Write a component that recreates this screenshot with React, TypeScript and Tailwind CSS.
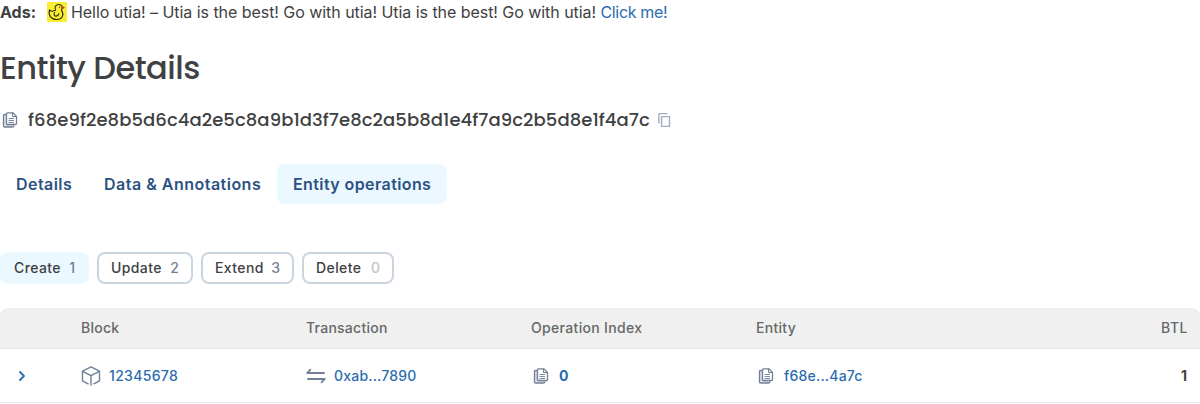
import React from "react";

function DocsIcon() {
  return (
    <svg className="size-5 shrink-0 text-[#718096]" viewBox="0 0 20 20" fill="none" stroke="currentColor" strokeLinejoin="round" strokeLinecap="round">
      <path d="M5.5 4.5H4.4q-.9 0-.9.9v10.5q0 1.1 1.1 1.1h8q1 0 1.3-1" strokeWidth="1.3" />
      <path d="M5.1 5.2v9.2q0 1.2 1.2 1.2h7" strokeWidth="1.8" strokeLinecap="butt" opacity=".3" />
      <path d="M7.5 2.8h5.3L16.5 6.4v7.1q0 1-1 1H7.5q-1 0-1-1V3.8q0-1 1-1z" strokeWidth="1.3" />
      <path d="M12.5 3v2.9q0 .6.6.6h3.1" strokeWidth="1.1" />
      <path d="M8.6 8.5h5.4M8.6 10.5h5.4M8.6 12.5h5.4" strokeWidth=".9" strokeLinecap="butt" />
    </svg>
  );
}

function CopyIcon() {
  return (
    <svg className="ml-1.5 size-5 shrink-0 text-[#a0aec0]" viewBox="0 0 20 20" fill="none" stroke="currentColor" strokeWidth="1.4">
      <path d="M2.9 13.6V4.4q0-.8.8-.8h7.8" />
      <path d="M5.6 6.6h7.9v9.8H5.6z" strokeLinejoin="round" />
    </svg>
  );
}

function BlockIcon() {
  return (
    <svg className="size-5 shrink-0 text-[#718096]" viewBox="0 0 20 20" fill="none" stroke="currentColor" strokeWidth="1.4" strokeLinejoin="round">
      <path d="M7.6 18.1 1.5 14.9V5.1L10 .9l8.5 4.2v9.8l-6.1 3.2M10 19.7V9.6M1.7 5.3 10 9.6l8.3-4.3" />
    </svg>
  );
}

function TransactionIcon() {
  return (
    <svg className="size-5 shrink-0 text-[#718096]" viewBox="0 0 20 20" fill="none" stroke="currentColor" strokeWidth="1.8" strokeLinecap="round" strokeLinejoin="round">
      <path d="M18 7H1.2l3.2-3.4M2 13h16.8l-3.2 3.4" />
    </svg>
  );
}

function Duck() {
  return (
    <svg className="mr-1 ml-[11px] size-5 shrink-0" viewBox="0 0 20 20" fill="none" stroke="#302b12" strokeWidth="1.05" strokeLinecap="round" strokeLinejoin="round">
      <path d="M0 0h20v20H0z" fill="#f9ed32" stroke="none" />
      <path d="M8.6 8.2C7.2 5.4 8.6 2.5 11.6 2.5c2.2 0 3.4 1.4 3.4 3.2 0 1.4-.6 1.9-.6 2.6 2.9 3.6 1.7 9.2-5 9.2-5.5 0-8.4-4.5-6.9-9.8.9 1.4 1.9 1.8 3 1.6 1.1-.2 1.7-1.1 3.1-1.1z" />
      <path d="M7.5 10.5c-.9 2-.3 3.6 1.3 3.6 1.5 0 2.8-.8 3.1-2.4" />
      <path d="M15.1 4.7l2 .8-2.1 1.3" stroke="#ba3b20" />
      <circle cx="12.4" cy="5.1" r=".65" fill="#302b12" stroke="none" />
    </svg>
  );
}

const tabs = [
  { label: "Details", style: "w-[88px] tracking-[0.45px]" },
  { label: "Data & Annotations", style: "w-[189px] tracking-[0.49px]" },
  { label: "Entity operations", style: "w-[170px] rounded-lg bg-[#ebf8ff] tracking-[0.4px]" },
];
const filters = [
  { label: "Create", count: 1, box: "w-[89px] border-[#ebf8ff] bg-[#ebf8ff]", num: "text-[#718096]" },
  { label: "Update", count: 2, box: "w-24 border-[#cbd5e0]", num: "text-[#718096]" },
  { label: "Extend", count: 3, box: "w-[93px] border-[#cbd5e0]", num: "text-[#718096]" },
  { label: "Delete", count: 0, box: "w-[92px] border-[#cbd5e0]", num: "text-[#c3c4c5]" },
];
const columns = "grid grid-cols-[75px_225px_225px_225px_1fr_150px]";

export default function App() {
  return (
    <main className="h-[404px] w-[1200px] overflow-hidden bg-white font-['Inter',sans-serif] text-[#404142]">
      <div className="flex h-6 items-center text-base whitespace-nowrap">
        <span className="font-bold">Ads:</span>
        <Duck />
        <span className="tracking-[-0.05px]">Hello utia! – Utia is the best! Go with utia! Utia is the best! Go with utia! <a className="tracking-[-0.35px] text-[#2b6cb0]">Click me!</a></span>
      </div>
      <h1 className="mt-6 h-10 font-['Poppins','Lato',sans-serif] text-[32px] leading-10 font-medium tracking-[-0.5px] whitespace-nowrap">Entity Details</h1>
      <div className="mt-4 flex h-8 items-center">
        <DocsIcon />
        <span className="ml-2 font-['Poppins','Lato',sans-serif] text-lg font-medium tracking-[0.07px] whitespace-nowrap">f68e9f2e8b5d6c4a2e5c8a9b1d3f7e8c2a5b8d1e4f7a9c2b5d8e1f4a7c</span>
        <CopyIcon />
      </div>
      <nav className="mt-7 flex h-10 font-semibold text-[#2c5282]">
        {tabs.map((t) => (
          <button key={t.label} className={`pl-4 text-left whitespace-nowrap ${t.style}`}>{t.label}</button>
        ))}
      </nav>
      <div className="mt-12 flex gap-2">
        {filters.map((f) => (
          <button key={f.label} className={`flex h-8 items-center justify-between rounded-lg border-2 px-3 text-sm font-medium ${f.box}`}>
            <span className="tracking-[0.4px]">{f.label}</span>
            <span className={f.num}>{f.count}</span>
          </button>
        ))}
      </div>
      <section className="mt-6 text-sm font-medium">
        <div className={`${columns} h-[41px] items-center rounded-t-lg border-b border-[#e2e8f0] bg-[#f0f0f0] tracking-[0.25px] text-[#666768]`}>
          <span />
          <span className="pl-1.5">Block</span>
          <span className="pl-1.5">Transaction</span>
          <span className="pl-1.5 tracking-[0.33px]">Operation Index</span>
          <span className="pl-1.5 tracking-[0.3px]">Entity</span>
          <span className="pr-3 text-right tracking-[0.5px]">BTL</span>
        </div>
        <div className={`${columns} h-[54px] items-center border-b border-[#ececec] text-[#2b6cb0]`}>
          <svg className="ml-3 size-5" viewBox="0 0 20 20" fill="none" stroke="currentColor" strokeWidth="1.8" strokeLinecap="round" strokeLinejoin="round">
            <path d="m8 6 4 4-4 4" />
          </svg>
          <div className="flex items-center gap-2 pl-1.5 tracking-[0.32px]"><BlockIcon />12345678</div>
          <div className="flex items-center gap-2 pl-1.5 tracking-[0.2px]"><TransactionIcon />0xab...7890</div>
          <div className="flex items-center gap-2 pl-1.5 font-bold"><DocsIcon />0</div>
          <div className="flex items-center gap-2 pl-1.5 tracking-[0.2px]"><DocsIcon />f68e...4a7c</div>
          <span className="pr-[13px] text-right font-bold text-[#404142]">1</span>
        </div>
      </section>
    </main>
  );
}
